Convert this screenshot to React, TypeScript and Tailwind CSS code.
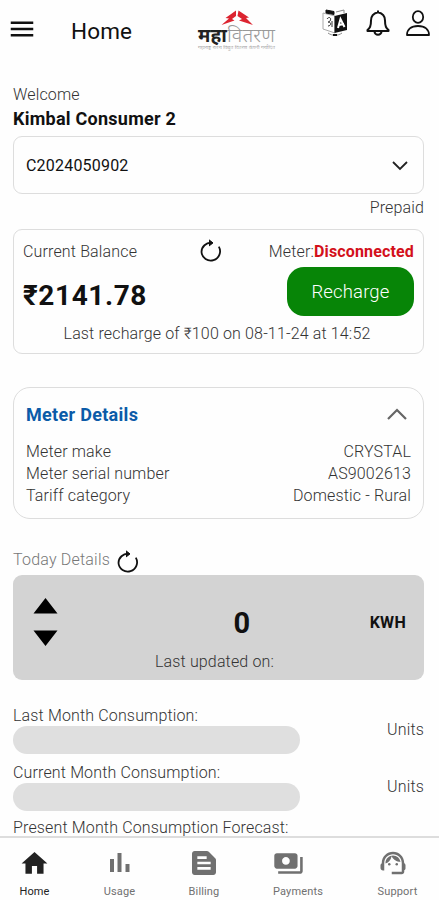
import { useState } from "react";
import {
  MdHome,
  MdMenu,
  MdPayments,
  MdSupportAgent,
  MdTextSnippet,
} from "react-icons/md";

const Logo = () => (
  <svg width="82" height="52" viewBox="0 0 82 52">
    <path d="M40 10.500L29.500 18l3.500.5-7.500 6.500 13-4.500-2.500-1.500 4-3z" fill="#dc2430" />
    <path d="M42.500 10.500L53 17.500l-3 .5 7 7-14-4.500 3-1.500-4.500-3z" fill="#dc2430" />
    <text
      x="2"
      y="42"
      textLength="29"
      lengthAdjust="spacingAndGlyphs"
      className="font-['Noto_Sans',sans-serif] text-[19px] font-bold"
      fill="#222"
    >
      महा
    </text>
    <text
      x="31"
      y="42"
      textLength="48"
      lengthAdjust="spacingAndGlyphs"
      className="font-['Noto_Sans',sans-serif] text-[19px]"
      fill="#999"
    >
      वितरण
    </text>
    <text
      x="2"
      y="49"
      textLength="77"
      lengthAdjust="spacingAndGlyphs"
      className="font-['Noto_Sans',sans-serif] text-[4.5px]"
      fill="#777"
    >
      महाराष्ट्र राज्य विद्युत वितरण कंपनी मर्यादित
    </text>
  </svg>
);

const LanguageIcon = () => (
  <svg width="26" height="28" viewBox="0 0 26 28" fill="none">
    <path d="M1 4l12 3v17L1 20z" fill="#fff" stroke="#aaa" />
    <path d="M12.500 7L25 4v17l-12.500 3z" fill="#111" />
    <path d="M4 1l8 1.500v3L4 4z" fill="#111" stroke="#111" />
    <path d="M14 3l8-2v3M6 24c4 3 10 3 14 0" stroke="#888" />
    <path d="M11 26h4" stroke="#111" strokeWidth="2" />
    <path d="M5 10c2-3 5-1 3 2-1 1-2 1-2 1 4 0 3 4 0 4m4-5v6" stroke="#333" />
    <path d="M16 19l2.500-9 4 8m-5.500-2 5-1" stroke="#fff" strokeWidth="2" />
  </svg>
);

const BellIcon = () => (
  <svg width="24" height="28" viewBox="0 0 24 28" fill="none" stroke="#111" strokeWidth="2" strokeLinejoin="round">
    <path d="M12 1.500v2M12 3.200c-4.500 1-7 4.300-7 8.300 0 6-1.200 7.500-3.500 9.500V22h21v-1c-2.300-2-3.500-3.500-3.500-9.500 0-4-2.500-7.300-7-8.300z" />
    <path d="M8.500 22.500a3.500 3.300 0 0 0 7 0" />
  </svg>
);

const UserIcon = () => (
  <svg width="24" height="28" viewBox="0 0 24 28" fill="none" stroke="#111" strokeWidth="1.800">
    <ellipse cx="12" cy="8" rx="5.200" ry="5.800" />
    <path d="M1 26c0-5.500 4-9 11-9s11 3.500 11 9z" strokeLinejoin="round" />
  </svg>
);

const ReloadIcon = () => (
  <svg width="22" height="24" viewBox="0 0 22 24" fill="none" stroke="#111" strokeWidth="1.800">
    <path d="M11.500 3.800A9.300 9.300 0 0 0 1.500 13A9.300 9.300 0 1 0 18.800 7.600" />
    <path d="M9 .8l4 3.100-4 3.100" fill="#111" strokeWidth="1" />
  </svg>
);

const UsageIcon = () => (
  <svg width="22" height="22" viewBox="0 0 22 22" fill="currentColor">
    <path d="M1 7h4v13H1zM8.500 1h4v19h-4zM16.500 12h4v8h-4z" />
  </svg>
);

const details = [
  { label: "Meter make", value: "CRYSTAL" },
  { label: "Meter serial number", value: "AS9002613" },
  { label: "Tariff category", value: "Domestic - Rural" },
];

const tabs = [
  { name: "Home", icon: <MdHome size={31} />, width: "w-[69px]" },
  { name: "Usage", icon: <UsageIcon />, width: "w-[101px]" },
  { name: "Billing", icon: <MdTextSnippet size={32} />, width: "w-[68px]" },
  { name: "Payments", icon: <MdPayments size={31} className="mr-[19px]" />, width: "w-[120px]" },
  { name: "Support", icon: <MdSupportAgent size={30} className="mr-[9px]" />, width: "w-[79px]" },
];

const Consumption = ({ label }: { label: string }) => (
  <section className="flex h-[57px] justify-between">
    <div>
      <p className="h-[21px] leading-[21px]">{label}</p>
      <div className="h-7 w-[287px] rounded-full bg-[#dfdfdf]"></div>
    </div>
    <span className="pt-[14px] leading-[21px]">Units</span>
  </section>
);

const App = () => {
  const [open, setOpen] = useState(true);
  const [active, setActive] = useState("Home");

  return (
    <div className="flex h-[900px] w-full flex-col overflow-hidden bg-[#fefefe] font-[Roboto,sans-serif] text-[16px] font-light tracking-[0.15px] text-[#333]">
      <header className="flex h-[62px] shrink-0 items-start pl-[7px] text-[#111]">
        <button className="mt-[14px]">
          <MdMenu size={30} />
        </button>
        <h1 className="mt-[17px] ml-[34px] w-[125px] text-[22.5px] leading-[28px] font-normal">Home</h1>
        <Logo />
        <div className="mt-[9px] ml-[44px] flex">
          <LanguageIcon />
          <span className="ml-[18px]">
            <BellIcon />
          </span>
          <span className="ml-[16px]">
            <UserIcon />
          </span>
        </div>
      </header>

      <main className="min-h-0 flex-1 overflow-hidden pt-[23px] pr-[15px] pl-[13px]">
        <p className="h-[22px] leading-[20px]">Welcome</p>
        <h2 className="h-[29px] text-[18px] leading-[23px] font-bold tracking-[0.25px] text-[#111]">
          Kimbal Consumer 2
        </h2>
        <button className="flex h-[58px] w-full items-center justify-between rounded-[9px] border border-[#ddd] px-3 pt-px text-left font-normal tracking-[0.2px] text-[#111]">
          C2024050902
          <svg width="18" height="12" viewBox="0 0 18 12" fill="none" stroke="#222" strokeWidth="1.800" className="mr-[2px]">
            <path d="M2 2l7 7 7-7" />
          </svg>
        </button>
        <p className="h-[35px] pt-[4px] text-right leading-[20px]">Prepaid</p>

        <section className="h-[125px] rounded-[9px] border border-[#ddd] px-[9px] pt-[9px]">
          <div className="flex h-[28px] items-start leading-[25px]">
            <span className="w-[177px]">Current Balance</span>
            <ReloadIcon />
            <span className="ml-auto">
              Meter:<b className="font-bold text-[#d3101b]">Disconnected</b>
            </span>
          </div>
          <div className="flex h-[54px] items-start justify-between">
            <span className="pt-[12px] text-[28px] leading-[34px] font-bold tracking-[0.6px] text-[#111]">₹2141.78</span>
            <button className="h-[49px] w-[127px] rounded-[17px] bg-[#078507] pt-[2px] text-[18.5px] text-white">
              Recharge
            </button>
          </div>
          <p className="pr-[3px] text-center leading-[25px]">Last recharge of ₹100 on 08-11-24 at 14:52</p>
        </section>

        <section className="mt-[33px] h-[132px] rounded-[17px] border border-[#ddd] px-3 pt-[14px]">
          <button
            onClick={() => setOpen(!open)}
            className="flex h-[38px] w-full items-start justify-between text-[18px] leading-[26px] font-bold tracking-[0.3px] text-[#0b5ba8]"
          >
            Meter Details
            <svg width="22" height="14" viewBox="0 0 22 14" fill="none" stroke="#666" strokeWidth="2.200" className="mt-[5px] mr-[3px]">
              <path d="M2 12l9-9 9 9" />
            </svg>
          </button>
          {open &&
            details.map(({ label, value }) => (
              <div key={label} className="flex h-[22px] justify-between leading-[23px]">
                <span>{label}</span>
                <span>{value}</span>
              </div>
            ))}
        </section>

        <div className="mt-[30px] flex h-[26px] leading-[22px] tracking-[0.2px] text-[#777]">
          <span className="w-[104px]">Today Details</span>
          <span className="pt-px">
            <ReloadIcon />
          </span>
        </div>
        <section className="flex h-[105px] flex-col rounded-[9px] bg-[#d3d3d3]">
          <div className="grid h-[76px] grid-cols-[64px_1fr_100px] items-center pt-[17px] text-[#111]">
            <svg width="25" height="50" viewBox="0 0 25 50" fill="#000" className="ml-5">
              <path d="M12.500 1l12 15.500H.500zM.500 33.500h24l-12 15.500z" />
            </svg>
            <span className="pt-[4px] pl-[83px] text-center text-[29px] font-bold">0</span>
            <span className="pt-[3px] pr-[18px] text-right font-bold tracking-[0.3px]">KWH</span>
          </div>
          <p className="pr-[8px] text-center leading-[22px] tracking-[0.15px]">Last updated on:</p>
        </section>

        <div className="mt-[25px]">
          <Consumption label="Last Month Consumption:" />
          <Consumption label="Current Month Consumption:" />
          <p className="h-[16px] pt-[1px] leading-[16px]">Present Month Consumption Forecast:</p>
        </div>
      </main>

      <nav className="flex h-[64px] shrink-0 border-t-2 border-[#ddd] text-[11px] font-normal">
        {tabs.map(({ name, icon, width }) => (
          <button
            key={name}
            onClick={() => setActive(name)}
            className={`flex shrink-0 flex-col items-center ${width} ${name === active ? "text-[#222]" : "text-[#707070]"}`}
          >
            <span className="flex h-[52px] items-center">{icon}</span>
            <span className="-mt-[4px] leading-[16px]">{name}</span>
          </button>
        ))}
      </nav>
    </div>
  );
};

export default App;
